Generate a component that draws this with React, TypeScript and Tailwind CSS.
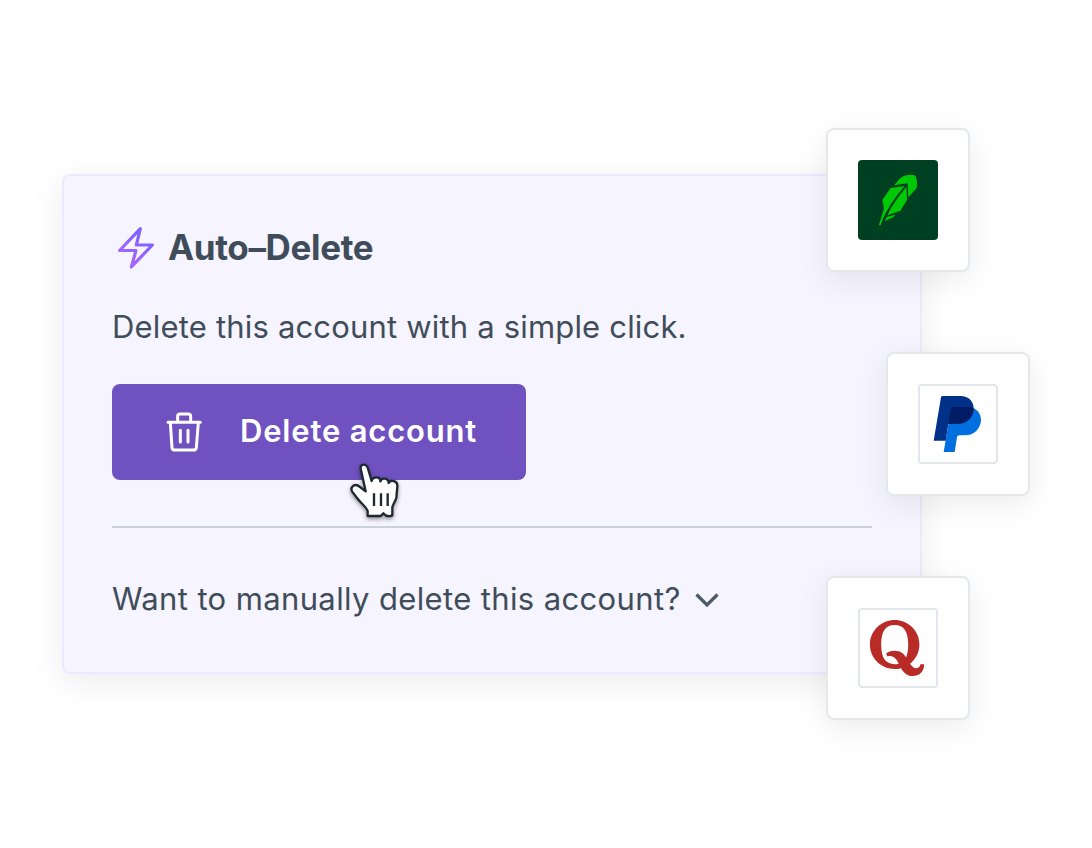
import type { ReactNode } from 'react'
import { clsx } from 'clsx'
import { FaQuora } from 'react-icons/fa'

function BoltIcon() {
  return (
    <svg viewBox="30 27 120 138" className="h-[46px] w-10" fill="none">
      <defs>
        <linearGradient id="bolt" x1="141" y1="36" x2="39" y2="156" gradientUnits="userSpaceOnUse">
          <stop offset="0.3" stopColor="#8263ff" />
          <stop offset="0.75" stopColor="#a764ff" />
        </linearGradient>
      </defs>
      <path
        d="M103 38 41 103.500H90L76 153 139 87H91Z"
        stroke="url(#bolt)"
        strokeWidth="9.5"
        strokeLinejoin="round"
      />
    </svg>
  )
}

function TrashIcon() {
  return (
    <svg viewBox="42 30 120 132" className="h-11 w-10" fill="none" stroke="#fff" strokeWidth="9" strokeLinecap="round" strokeLinejoin="round">
      <path d="M54 67H151M83 65V49Q83 42 90 42H115Q122 42 122 49V65" />
      <path d="M61 68 66 143Q67 150 75 150H130Q138 150 139 143L145 68M91 91V126M114 91V126" />
    </svg>
  )
}

function HandCursor() {
  return (
    <svg viewBox="0 0 210 210" className="pointer-events-none absolute left-[228px] top-[71px] size-[70px] drop-shadow-[0_2px_2px_rgba(0,0,0,0.4)]">
      <path
        d="M77 109 63 46C60 35 63 29 71 29C79 29 82 34 84 41L95 78C97 69 102 67 109 67C117 67 121 72 121 79C123 72 128 70 134 71C142 72 146 77 146 84C149 77 154 76 160 78C169 80 173 86 172 95L169 128C167 137 157 151 157 158V181Q147 186 137 181L130 175 122 183H83V168C79 155 60 142 51 129L36 109C33 103 35 96 40 92C47 88 53 90 60 96Z"
        fill="#fff"
        stroke="#1d2830"
        strokeWidth="7"
        strokeLinejoin="round"
      />
      <path d="M102 115V153M123 115V153M143 115V153" stroke="#1d2830" strokeWidth="7" />
    </svg>
  )
}

function RobinhoodLogo() {
  return (
    <svg viewBox="144 150 240 240" className="size-20" fill="#00c805">
      <path d="M252 226 269 206Q281 194 304 194Q318 194 319 204Q323 216 320 234L295 262 293 220Z" />
      <path d="M242 234 284 228C254 263 226 302 212 345Q209 347 207 344L221 299Q222 291 217 270Z" />
      <path d="M289 231 291 270 271 302 232 316C246 286 265 260 289 231Z" />
      <path d="M230 321 256 314 251 321 225 333Z" />
    </svg>
  )
}

function PaypalLogo() {
  return (
    <svg viewBox="24 24 240 240" className="size-20">
      <path d="M123 99Q124 93 130 93H180C201 98 213 112 213 132C212 158 192 178 165 178H147Q142 178 141 183L134 228H101Z" fill="#0070e0" />
      <path d="M93 64Q94 60 98 60H151C176 60 191 76 191 98C191 124 170 143 147 143H115L107 194H71Z" fill="#003087" />
      <path d="M123 99Q124 93 130 93H178Q185 94 191 97C191 124 170 143 147 143H115Z" fill="#001c64" />
    </svg>
  )
}

interface LogoTileProps {
  className: string
  dark?: boolean
  children: ReactNode
}

function LogoTile({ className, dark, children }: LogoTileProps) {
  return (
    <div className={clsx('absolute flex size-36 items-center justify-center rounded-lg border-2 border-[#e5e8eb] bg-white shadow-[0_8px_32px_rgba(0,0,0,0.08)]', className)}>
      <div className={clsx('flex size-20 items-center justify-center rounded', dark ? 'bg-[#004022]' : 'border-2 border-[#e3e7eb]')}>
        {children}
      </div>
    </div>
  )
}

export default function App() {
  return (
    <main className="relative h-[848px] w-[1092px] overflow-hidden bg-white pl-[62px] pt-[174px] font-['Inter',sans-serif] text-[#3f4d5a]">
      <section className="flex h-[500px] w-[860px] flex-col rounded-lg border-2 border-[#ece8fd] bg-[#f6f4ff] px-12 pt-12 shadow-[0_8px_32px_rgba(0,0,0,0.08)]">
        <div className="flex h-12 items-center gap-3 pl-1">
          <BoltIcon />
          <h2 className="whitespace-nowrap pb-0.5 text-[35px] font-bold tracking-[-0.35px]">Auto–Delete</h2>
        </div>
        <p className="mt-[31px] h-[49px] whitespace-nowrap text-[31px] leading-[48px] tracking-[0.18px]">Delete this account with a simple click.</p>

        <div className="relative mt-8 w-[414px]">
          <button className="flex h-24 w-full cursor-pointer items-center rounded-lg bg-[#6f51bf] pl-[52px] text-white">
            <TrashIcon />
            <span className="ml-9 whitespace-nowrap pb-0.5 text-[31px] font-semibold tracking-[0.82px]">Delete account</span>
          </button>
          <HandCursor />
        </div>

        <hr className="mt-[46px] border-t-2 border-[#cbd0dc]" />

        <div className="mt-12 flex h-12 items-center gap-[14px]">
          <span className="whitespace-nowrap pb-0.5 text-[31px] tracking-[0.37px]">Want to manually delete this account?</span>
          <svg viewBox="0 0 24 16" className="h-4 w-6 shrink-0" fill="none">
            <path d="M1.500 2.500 12 13 22.500 2.500" stroke="#4d5b68" strokeWidth="3.2" />
          </svg>
        </div>
      </section>

      <LogoTile className="left-[826px] top-[128px]" dark>
        <RobinhoodLogo />
      </LogoTile>
      <LogoTile className="left-[886px] top-[352px]">
        <div className="-m-0.5 shrink-0">
          <PaypalLogo />
        </div>
      </LogoTile>
      <LogoTile className="left-[826px] top-[576px]">
        <FaQuora className="mb-px mr-0.5 size-16 shrink-0 text-[#b92b27]" />
      </LogoTile>
    </main>
  )
}
